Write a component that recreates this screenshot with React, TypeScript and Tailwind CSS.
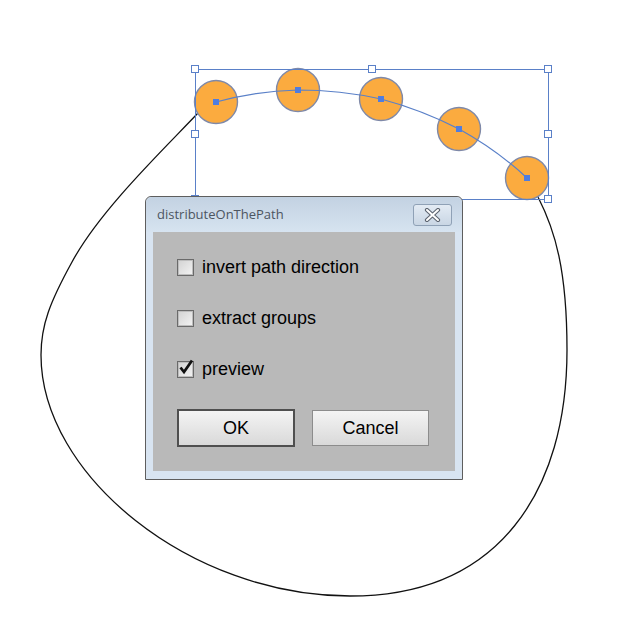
import type { ReactNode } from "react";

const FONT = { fontFamily: '"Liberation Sans", Arial, sans-serif' };

const dots = [
  { x: 216, y: 102 },
  { x: 298, y: 90 },
  { x: 381, y: 99 },
  { x: 459, y: 129 },
  { x: 527, y: 178 },
];

const handles = [
  [195, 69],
  [372, 69],
  [548, 69],
  [195, 134],
  [548, 134],
  [195, 199],
  [548, 199],
];

function Artboard() {
  return (
    <svg className="absolute inset-0" width={644} height={619} viewBox="0 0 644 619">
      {/* closed black path */}
      <path
        d="M198,113 C165,148 100,210 72,262 C50,302 41,325 41,355 C41,475 190,596 350,596 C500,596 567,490 567,350 C567,270 555,230 538,197"
        fill="none"
        stroke="#111"
        strokeWidth={1.3}
      />
      {dots.map((d, i) => (
        <circle key={i} cx={d.x} cy={d.y} r={21.5} fill="#fbab3f" stroke="#7f89a8" strokeWidth={1.4} />
      ))}
      <path
        d="M216,102 Q257,91 298,90 Q340,90 381,99 Q422,110 459,129 Q497,150 527,178"
        fill="none"
        stroke="#5a80c8"
        strokeWidth={1.2}
      />
      <rect x={195.5} y={69.5} width={353} height={130} fill="none" stroke="#5a80c8" strokeWidth={1} />
      {dots.map((d, i) => (
        <rect key={i} x={d.x - 3} y={d.y - 3} width={6} height={6} fill="#4f7de0" />
      ))}
      {handles.map(([x, y], i) => (
        <rect key={i} x={x - 3.5} y={y - 3.5} width={7} height={7} fill="#fff" stroke="#5a80c8" strokeWidth={1} />
      ))}
    </svg>
  );
}

function CheckRow({ label, checked }: { label: string; checked?: boolean }) {
  return (
    <div className="flex items-center gap-[8px]">
      <span className="relative flex h-[17px] w-[17px] items-center justify-center border border-[#6a6a6a] bg-gradient-to-br from-[#d2d2d2] to-[#f4f4f4] shadow-[inset_0_0_0_1px_#bdbdbd]">
        {checked ? (
          <svg width="16" height="16" viewBox="0 0 16 16" className="absolute -top-[3px] left-[0px]">
            <path d="M2.5,8.5 L6,13 L14,1.5" fill="none" stroke="#111" strokeWidth={2.8} strokeLinejoin="miter" />
          </svg>
        ) : null}
      </span>
      <span className="text-[18px] leading-none text-black">{label}</span>
    </div>
  );
}

function Btn({ children, primary }: { children: ReactNode; primary?: boolean }) {
  return (
    <button
      className={
        primary
          ? "flex h-[38px] w-[118px] items-center justify-center border-2 border-[#4f4f4f] bg-gradient-to-b from-[#f4f4f4] to-[#d9d9d9] text-[18px] text-black"
          : "mt-[1px] flex h-[36px] w-[117px] items-center justify-center border border-[#8c8c8c] bg-gradient-to-b from-[#f4f4f4] to-[#d9d9d9] text-[18px] text-black"
      }
    >
      {children}
    </button>
  );
}

function Dialog() {
  return (
    <div
      className="absolute left-[145px] top-[196px] flex h-[284px] w-[318px] flex-col rounded-t-[6px] border border-[#5e5e5e] bg-[#d8e4f1]"
      style={FONT}
    >
      <div className="flex h-[35px] items-center justify-between rounded-t-[6px] bg-gradient-to-b from-[#c3d2e2] to-[#d6e3f0] pl-[11px] pr-[10px]">
        <span className="text-[13px] text-[#4c5561]" style={{ fontFamily: '"Open Sans", "Noto Sans", sans-serif' }}>
          distributeOnThePath
        </span>
        <span className="mt-[1px] flex h-[22px] w-[39px] items-center justify-center rounded-[3px] border border-[#8fa1b6] bg-gradient-to-b from-[#e3ebf4] to-[#c9d6e4]">
          <svg width="17" height="14" viewBox="0 0 17 14">
            <path d="M3,2 L14,12 M14,2 L3,12" stroke="#5c6470" strokeWidth={4.2} strokeLinecap="round" />
            <path d="M3,2 L14,12 M14,2 L3,12" stroke="#fff" strokeWidth={2} strokeLinecap="round" />
          </svg>
        </span>
      </div>
      <div className="mx-[7px] flex h-[239px] flex-col bg-[#b9b9b9] pl-[24px] pt-[26px]">
        <div className="flex flex-col gap-[33px]">
          <CheckRow label="invert path direction" />
          <CheckRow label="extract groups" />
          <CheckRow label="preview" checked />
        </div>
        <div className="mt-[31px] flex items-start gap-[17px]">
          <Btn primary>OK</Btn>
          <Btn>Cancel</Btn>
        </div>
      </div>
    </div>
  );
}

export default function App() {
  return (
    <div className="relative h-[619px] w-[644px] overflow-hidden bg-white">
      <Artboard />
      <Dialog />
    </div>
  );
}
